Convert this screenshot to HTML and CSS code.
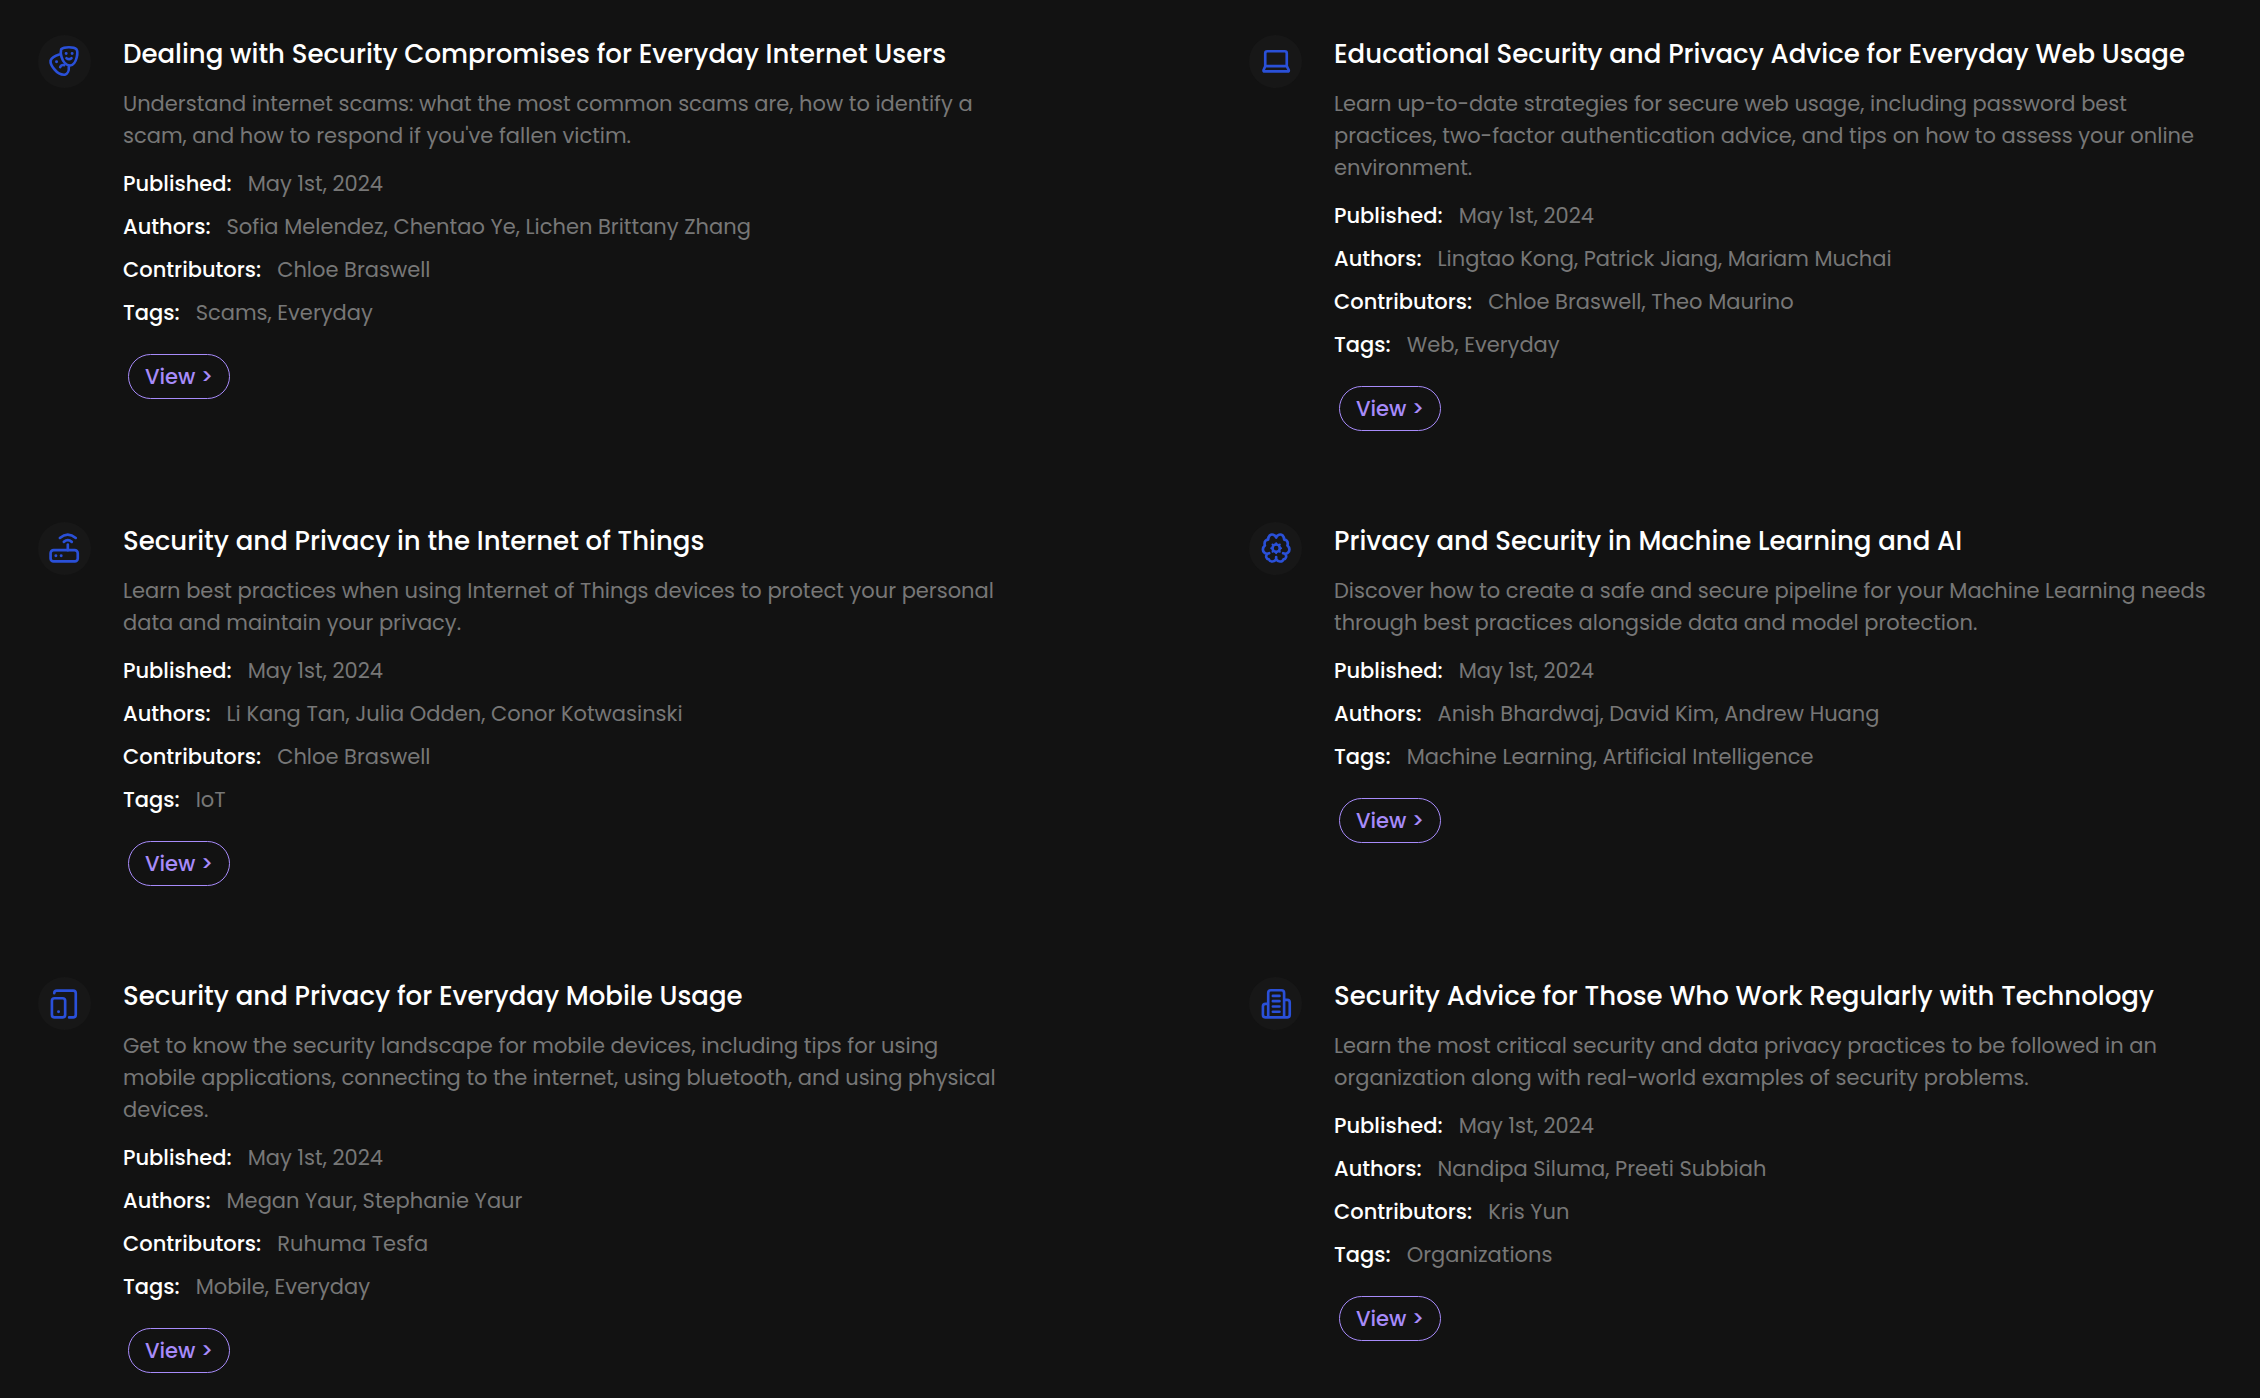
FILE: index.html
```html
<!DOCTYPE html>
<html lang="en">
<head>
<meta charset="utf-8">
<title>Security Guides</title>
<meta name="viewport" content="width=device-width, initial-scale=1">
<link rel="stylesheet" href="styles.css">
</head>
<body>
<main class="guides">
  <article class="guide">
    <span class="icon"><svg viewBox="24 30 160 160" aria-hidden="true"><path d="M94 73C103 65 132 65 140 73C144 78 143 88 141 97C138 110 130 122 121 122C109 122 99 110 95 96C92 86 92 79 94 73Z"/><path d="M88 89C77 92 66 98 62 107C61 115 65 124 73 133C82 144 95 151 105 150C113 148 118 138 117 126"/><path d="M110 100Q118 106 125 100M91 127Q94 119 103 121"/><path class="dot" d="M109 86v0M127 86v0M80 111v0"/></svg></span>
    <div class="body">
      <h2>Dealing with Security Compromises for Everyday Internet Users</h2>
      <p class="summary">Understand internet scams: what the most common scams are, how to identify a scam, and how to respond if you've fallen victim.</p>
      <dl class="meta">
        <div><dt>Published:</dt><dd>May 1st, 2024</dd></div>
        <div><dt>Authors:</dt><dd>Sofia Melendez, Chentao Ye, Lichen Brittany Zhang</dd></div>
        <div><dt>Contributors:</dt><dd>Chloe Braswell</dd></div>
        <div><dt>Tags:</dt><dd>Scams, Everyday</dd></div>
      </dl>
      <button class="view" type="button">View &gt;</button>
    </div>
  </article>
  <article class="guide">
    <span class="icon"><svg viewBox="26 30 160 160" aria-hidden="true"><path d="M75 123V85Q75 79 81 79H134Q140 79 140 85V123M75 124H140L146 136Q147 140 143 140H73Q69 140 70 136Z"/></svg></span>
    <div class="body">
      <h2>Educational Security and Privacy Advice for Everyday Web Usage</h2>
      <p class="summary">Learn up-to-date strategies for secure web usage, including password best practices, two-factor authentication advice, and tips on how to assess your online environment.</p>
      <dl class="meta">
        <div><dt>Published:</dt><dd>May 1st, 2024</dd></div>
        <div><dt>Authors:</dt><dd>Lingtao Kong, Patrick Jiang, Mariam Muchai</dd></div>
        <div><dt>Contributors:</dt><dd>Chloe Braswell, Theo Maurino</dd></div>
        <div><dt>Tags:</dt><dd>Web, Everyday</dd></div>
      </dl>
      <button class="view" type="button">View &gt;</button>
    </div>
  </article>
  <article class="guide">
    <span class="icon"><svg viewBox="24 30 160 160" aria-hidden="true"><rect x="62" y="115" width="82" height="34" rx="9"/><path d="M114 98V115M90 78Q114 58 138 78M102 90Q114 80 126 90"/><path class="dot" d="M78 132v0M94 132v0"/></svg></span>
    <div class="body">
      <h2>Security and Privacy in the Internet of Things</h2>
      <p class="summary">Learn best practices when using Internet of Things devices to protect your personal data and maintain your privacy.</p>
      <dl class="meta">
        <div><dt>Published:</dt><dd>May 1st, 2024</dd></div>
        <div><dt>Authors:</dt><dd>Li Kang Tan, Julia Odden, Conor Kotwasinski</dd></div>
        <div><dt>Contributors:</dt><dd>Chloe Braswell</dd></div>
        <div><dt>Tags:</dt><dd>IoT</dd></div>
      </dl>
      <button class="view" type="button">View &gt;</button>
    </div>
  </article>
  <article class="guide">
    <span class="icon"><svg viewBox="26 30 160 160" aria-hidden="true"><path d="M108 77C105 67 94 66 89 70C85 74 84 78 84 83C78 83 73 88 73 94C73 97 73 99 74 101C67 107 66 117 72 122C75 125 78 126 81 126C75 133 78 142 86 143C90 152 103 151 108 142C113 151 126 152 130 143C138 142 141 133 135 126C138 126 141 125 144 122C150 117 149 107 142 101C143 99 143 97 143 94C143 88 138 83 132 83C132 78 131 74 127 70C122 66 111 67 108 77ZM81 126L87 124M135 126L129 124M108 142V136"/><circle cx="108" cy="109" r="11"/><path class="cog" d="M108 96V94M108 122V124M95 109H93M121 109H123M99 100L97 98M117 100L119 98M99 118L97 120M117 118L119 120"/></svg></span>
    <div class="body">
      <h2>Privacy and Security in Machine Learning and AI</h2>
      <p class="summary">Discover how to create a safe and secure pipeline for your Machine Learning needs through best practices alongside data and model protection.</p>
      <dl class="meta">
        <div><dt>Published:</dt><dd>May 1st, 2024</dd></div>
        <div><dt>Authors:</dt><dd>Anish Bhardwaj, David Kim, Andrew Huang</dd></div>
        <div><dt>Tags:</dt><dd>Machine Learning, Artificial Intelligence</dd></div>
      </dl>
      <button class="view" type="button">View &gt;</button>
    </div>
  </article>
  <article class="guide">
    <span class="icon"><svg viewBox="24 30 160 160" aria-hidden="true"><rect x="66" y="94" width="40" height="58" rx="8"/><path d="M73 79Q73 71 81 71H130Q138 71 138 79V144Q138 152 130 152H118"/><path class="dot" d="M86 135v0"/></svg></span>
    <div class="body">
      <h2>Security and Privacy for Everyday Mobile Usage</h2>
      <p class="summary">Get to know the security landscape for mobile devices, including tips for using mobile applications, connecting to the internet, using bluetooth, and using physical devices.</p>
      <dl class="meta">
        <div><dt>Published:</dt><dd>May 1st, 2024</dd></div>
        <div><dt>Authors:</dt><dd>Megan Yaur, Stephanie Yaur</dd></div>
        <div><dt>Contributors:</dt><dd>Ruhuma Tesfa</dd></div>
        <div><dt>Tags:</dt><dd>Mobile, Everyday</dd></div>
      </dl>
      <button class="view" type="button">View &gt;</button>
    </div>
  </article>
  <article class="guide">
    <span class="icon"><svg viewBox="26 30 160 160" aria-hidden="true"><path d="M84 152V78Q84 70 92 70H124Q132 70 132 78V152M84 111H76Q68 111 68 119V144Q68 152 76 152H141Q149 152 149 144V107Q149 99 141 99H132M98 87H118M98 103H118M98 119H118M98 135H118"/></svg></span>
    <div class="body">
      <h2>Security Advice for Those Who Work Regularly with Technology</h2>
      <p class="summary">Learn the most critical security and data privacy practices to be followed in an organization along with real-world examples of security problems.</p>
      <dl class="meta">
        <div><dt>Published:</dt><dd>May 1st, 2024</dd></div>
        <div><dt>Authors:</dt><dd>Nandipa Siluma, Preeti Subbiah</dd></div>
        <div><dt>Contributors:</dt><dd>Kris Yun</dd></div>
        <div><dt>Tags:</dt><dd>Organizations</dd></div>
      </dl>
      <button class="view" type="button">View &gt;</button>
    </div>
  </article>
</main>
</body>
</html>
```
FILE: styles.css
```css
* { box-sizing: border-box; }

body {
  margin: 0;
  background: #121212;
  color: #fff;
  font-family: Poppins, Inter, sans-serif;
  font-size: 21px;
  line-height: 32px;
}

.guides {
  display: grid;
  grid-template-columns: 1fr 1fr;
  column-gap: 238px;
  row-gap: 91px;
  padding: 35px 38px 24px;
}

.guide {
  display: flex;
  align-items: flex-start;
  gap: 32px;
}

.icon {
  flex: none;
  width: 53px;
  height: 53px;
  border-radius: 50%;
  background: #171717;
}

.icon svg {
  display: block;
  width: 100%;
  height: 100%;
  fill: none;
  stroke: #2a50d8;
  stroke-width: 8;
  stroke-linecap: round;
  stroke-linejoin: round;
}

.icon .dot { stroke-width: 9; }

.icon .cog { stroke-width: 6; }

.body { flex: 1; min-width: 0; }

h2 {
  margin: 0 0 15px;
  font-size: 26px;
  font-weight: 500;
  line-height: 38px;
}

.summary {
  margin: 0 0 13px;
  color: #777;
}

.meta {
  display: grid;
  gap: 5px;
  margin: 0;
}

.meta div {
  display: flex;
  gap: 16px;
  padding: 3px 0;
}

.meta dt { font-weight: 500; }

.meta dd {
  margin: 0;
  color: #777;
}

.view {
  display: block;
  margin: 22px 0 0 5px;
  padding: 0 16px;
  height: 45px;
  border: 1px solid #a78bfa;
  border-radius: 23px;
  background: none;
  color: #a78bfa;
  font: inherit;
  font-weight: 500;
}
```
